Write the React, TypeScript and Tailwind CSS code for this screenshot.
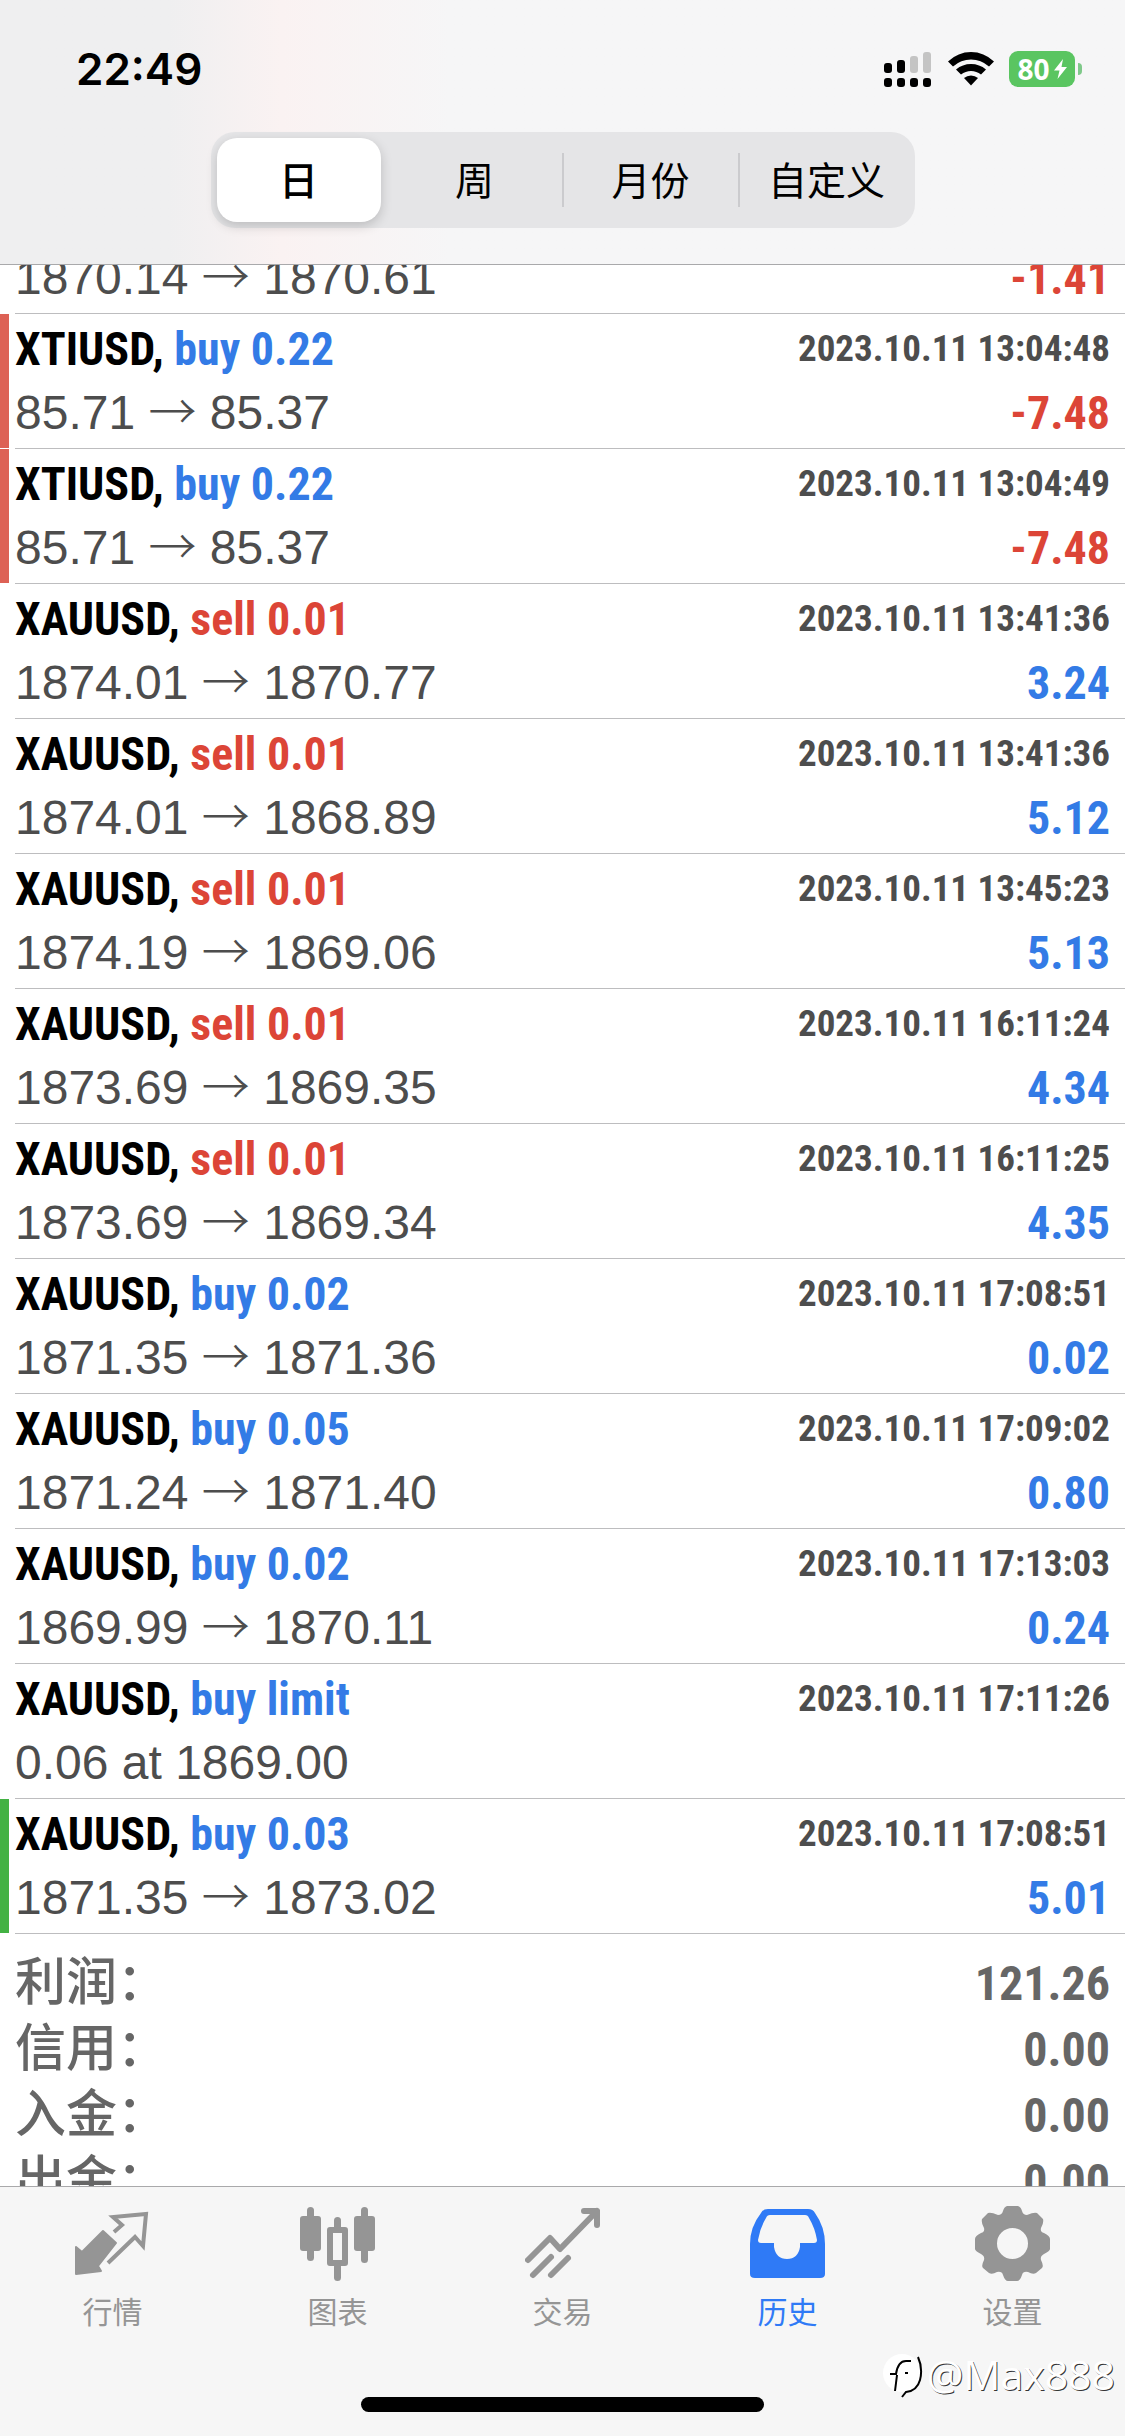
import React from "react";

type Trade = {
  symbol: string;
  side: string;
  time: string;
  open?: string;
  close?: string;
  note?: string;
  profit?: string;
  mark?: "red" | "green";
};

const trades: Trade[] = [
  { symbol: "XTIUSD", side: "buy 0.22", time: "2023.10.11 13:04:48", open: "85.71", close: "85.37", profit: "-7.48", mark: "red" },
  { symbol: "XTIUSD", side: "buy 0.22", time: "2023.10.11 13:04:49", open: "85.71", close: "85.37", profit: "-7.48", mark: "red" },
  { symbol: "XAUUSD", side: "sell 0.01", time: "2023.10.11 13:41:36", open: "1874.01", close: "1870.77", profit: "3.24" },
  { symbol: "XAUUSD", side: "sell 0.01", time: "2023.10.11 13:41:36", open: "1874.01", close: "1868.89", profit: "5.12" },
  { symbol: "XAUUSD", side: "sell 0.01", time: "2023.10.11 13:45:23", open: "1874.19", close: "1869.06", profit: "5.13" },
  { symbol: "XAUUSD", side: "sell 0.01", time: "2023.10.11 16:11:24", open: "1873.69", close: "1869.35", profit: "4.34" },
  { symbol: "XAUUSD", side: "sell 0.01", time: "2023.10.11 16:11:25", open: "1873.69", close: "1869.34", profit: "4.35" },
  { symbol: "XAUUSD", side: "buy 0.02", time: "2023.10.11 17:08:51", open: "1871.35", close: "1871.36", profit: "0.02" },
  { symbol: "XAUUSD", side: "buy 0.05", time: "2023.10.11 17:09:02", open: "1871.24", close: "1871.40", profit: "0.80" },
  { symbol: "XAUUSD", side: "buy 0.02", time: "2023.10.11 17:13:03", open: "1869.99", close: "1870.11", profit: "0.24" },
  { symbol: "XAUUSD", side: "buy limit", time: "2023.10.11 17:11:26", note: "0.06 at 1869.00" },
  { symbol: "XAUUSD", side: "buy 0.03", time: "2023.10.11 17:08:51", open: "1871.35", close: "1873.02", profit: "5.01", mark: "green" },
];

const totals = [
  { label: "利润：", value: "121.26" },
  { label: "信用：", value: "0.00" },
  { label: "入金：", value: "0.00" },
  { label: "出金：", value: "0.00" },
];

const narrow = "font-['Liberation_Sans_Narrow','Roboto_Condensed','Liberation_Sans',sans-serif] font-bold";
const cjk = "font-['Noto_Sans_CJK_SC',sans-serif]";

function Prices({ open, close, note, profit }: Partial<Trade>) {
  return (
    <div className="flex h-[60px] items-center justify-between leading-[60px]">
      <span className="font-['Liberation_Sans','Noto_Sans_CJK_SC',sans-serif] text-[48px] text-[#4d4d4d]">
        {note ?? (
          <>
            {open} <span className="font-['Noto_Sans_CJK_SC',sans-serif] font-light leading-none">→</span> {close}
          </>
        )}
      </span>
      {profit && (
        <span className={`${narrow} text-[46px] ${profit.startsWith("-") ? "text-[#dc4537]" : "text-[#337be6]"}`}>
          {profit}
        </span>
      )}
    </div>
  );
}

function TradeRow(t: Trade) {
  const bar =
    t.mark === "red" ? "border-[#dd6155]" : t.mark === "green" ? "border-[#43b244]" : "border-transparent";
  return (
    <li className="flex flex-col">
      <div className={`flex h-[134px] flex-col gap-[4px] border-l-9 pl-[6px] pr-[15px] pt-[5px] ${bar}`}>
        <div className={`flex h-[60px] items-center justify-between ${narrow}`}>
          <span className="text-[46px] leading-[60px] text-black">
            {t.symbol}, <span className={t.side.startsWith("sell") ? "text-[#dc4537]" : "text-[#337be6]"}>{t.side}</span>
          </span>
          <time className="text-[37px] leading-[60px] text-[#4d4d4d]">{t.time}</time>
        </div>
        <Prices {...t} />
      </div>
      <div className="ml-[15px] h-px bg-[#bdbdbf]" />
    </li>
  );
}

function StatusIcons() {
  return (
    <div className="flex items-center">
      <svg viewBox="0 0 48 36" className="mr-[16px] h-[36px] w-[48px]" aria-hidden="true">
        <g fill="#000">
          <rect x="0" y="12" width="8" height="10" rx="3" />
          <rect x="13" y="9" width="8" height="13" rx="3" />
          <rect x="0" y="27" width="8" height="9" rx="3" />
          <rect x="13" y="27" width="8" height="9" rx="3" />
          <rect x="26" y="27" width="8" height="9" rx="3" />
          <rect x="39" y="27" width="8" height="9" rx="3" />
        </g>
        <g fill="#c4c4c4">
          <rect x="26" y="5" width="8" height="17" rx="3" />
          <rect x="39" y="1" width="8" height="21" rx="3" />
        </g>
      </svg>
      <svg viewBox="0 0 46 36" className="mr-[15px] h-[36px] w-[46px]" aria-hidden="true">
        <path d="M0 10.500Q10 1 23 1Q36 1 46 10.500L41 15.500Q33 8.500 23 8.500Q13 8.500 5 15.500Z" />
        <path d="M8 18.500Q14.500 13 23 13Q31.500 13 38 18.500L33 23.500Q28.500 20 23 20Q17.500 20 13 23.500Z" />
        <path d="M16 27Q19 24.500 23 24.500Q27 24.500 30 27L23 34.500Z" />
      </svg>
      <div className="flex items-center">
        <div className="flex h-[36px] w-[66px] items-center justify-center gap-[4px] rounded-[9px] bg-[#5ac561] text-white">
          <span className="font-['Open_Sans',sans-serif] text-[28px] font-bold leading-none">80</span>
          <svg viewBox="0 0 13 20" className="h-[20px] w-[13px]" fill="currentColor" aria-hidden="true">
            <path d="M9 0L0 11.500H5.500L3.500 20L13 8H7.500Z" />
          </svg>
        </div>
        <div className="ml-[3px] h-[12px] w-[4px] rounded-r-full bg-[#7fc98a]" />
      </div>
    </div>
  );
}

const periods = ["日", "周", "月份", "自定义"];

const icons: Record<string, React.ReactNode> = {
  行情: (
    <>
      <path
        d="M1 41L7 46L28 25L41 37L23 60L26 65L1 68Z"
        fill="currentColor"
        stroke="currentColor"
        strokeWidth="2"
        strokeLinejoin="round"
      />
      <path d="M39 26L47 19L38 11L71 8L68 40L60 31L33 57" fill="none" stroke="currentColor" strokeWidth="4" />
    </>
  ),
  图表: (
    <g fill="currentColor">
      <rect x="0" y="10" width="21" height="35" rx="3" />
      <rect x="7" y="1" width="7" height="54" rx="3.500" />
      <rect x="54" y="10" width="21" height="35" rx="3" />
      <rect x="61" y="1" width="7" height="56" rx="3.500" />
      <path fillRule="evenodd" d="M30 21H45Q48 21 48 24V57Q48 60 45 60H30Q27 60 27 57V24Q27 21 30 21ZM33 27V54H42V27Z" />
      <rect x="34" y="11" width="7" height="14" rx="3.500" />
      <rect x="34" y="57" width="7" height="18" rx="3.500" />
    </g>
  ),
  交易: (
    <g fill="none" stroke="currentColor" strokeWidth="6" strokeLinecap="round" strokeLinejoin="round">
      <path d="M3 54L25 32L35 43L72 5M59 5H72V19" />
      <path d="M8 69L26 51M26 69L43 52" />
    </g>
  ),
  历史: (
    <path
      fill="currentColor"
      fillRule="evenodd"
      d="M18 3H58Q63 3 65 7Q75 21 75 38V68Q75 72 70 72H5Q0 72 0 68V38Q0 21 11 7Q13 3 18 3ZM20 9Q17 9 16 12Q10 22 8 34Q8 37 11 37H24V41Q26 53 37 53Q48 53 50 41V37H64Q67 37 67 34Q65 22 59 12Q58 9 55 9Z"
    />
  ),
  设置: (
    <path
      fill="currentColor"
      fillRule="evenodd"
      d="M32 0H43Q46 1 47 5Q48 9 52 9Q59 6 62 7L68 13Q69 17 66 22Q65 26 69 27Q75 30 75 33V43Q75 45 69 48Q65 50 66 54Q69 60 67 62L61 67Q58 69 53 66Q48 65 47 69Q45 75 42 75H33Q30 75 28 69Q27 65 22 66Q17 69 14 67L8 62Q6 60 9 54Q10 50 6 48Q0 45 0 43V33Q0 30 6 27Q10 26 9 22Q6 17 7 13L13 7Q16 6 23 9Q27 9 28 5Q29 1 32 0ZM37.500 22A15.500 15.500 0 1 0 37.500 53A15.500 15.500 0 1 0 37.500 22Z"
    />
  ),
};

export default function App() {
  return (
    <div className="relative flex h-screen flex-col overflow-hidden bg-white">
      <header className="flex shrink-0 flex-col border-b border-[#a9a9ab] bg-linear-to-r from-[#efeff0] from-15% via-[#faf2f2] via-25% to-[#f6f6f7] to-40%">
        <div className="flex h-[132px] items-center justify-between pl-[76px] pr-[43px] pt-[6px]">
          <time className="font-['Inter',sans-serif] text-[44px] font-semibold leading-none text-black">22:49</time>
          <StatusIcons />
        </div>
        <div className={`mx-auto mb-[36px] grid h-[96px] w-[704px] max-w-full grid-cols-4 rounded-[24px] bg-[#e5e5e7] ${cjk}`}>
          {periods.map((p, i) => (
            <div key={p} className="relative flex p-[6px]">
              {i > 1 && <span className="absolute -left-px top-[21px] h-[54px] w-[2px] bg-[#cbcbce]" />}
              <button
                type="button"
                className={
                  i === 0
                    ? "flex-1 rounded-[20px] bg-white pb-[4px] text-[39px] font-medium leading-none text-black shadow-[0_4px_12px_rgba(0,0,0,0.18)]"
                    : "flex-1 whitespace-nowrap pb-[4px] text-[39px] leading-none text-black"
                }
              >
                {p}
              </button>
            </div>
          ))}
        </div>
      </header>

      <main className="min-h-0 flex-1 overflow-hidden">
        <div className="flex h-[48px] flex-col justify-end overflow-hidden">
          <div className="px-[15px] pb-[5px]">
            <Prices open="1870.14" close="1870.61" profit="-1.41" />
          </div>
        </div>
        <div className="ml-[15px] h-px bg-[#bdbdbf]" />
        <ul>
          {trades.map((t, i) => (
            <TradeRow key={i} {...t} />
          ))}
        </ul>
        <dl className="px-[15px] pt-[15px] text-[#666]">
          {totals.map((s) => (
            <div key={s.label} className="flex h-[66px] items-baseline justify-between leading-[58px]">
              <dt className={`${cjk} text-[51px] font-medium`}>{s.label}</dt>
              <dd className={`${narrow} text-[48px]`}>{s.value}</dd>
            </div>
          ))}
        </dl>
      </main>

      <footer className="shrink-0 border-t border-[#a9a9ab] bg-[#f6f6f6]">
        <nav className="grid h-[146px] grid-cols-5 pt-[19px]">
          {Object.keys(icons).map((name) => (
            <button
              key={name}
              type="button"
              className={
                name === "历史"
                  ? "flex flex-col items-center text-[#2f7af6]"
                  : "flex flex-col items-center text-[#959595]"
              }
            >
              <svg viewBox="0 0 75 76" className="h-[76px] w-[75px]" aria-hidden="true">
                {icons[name]}
              </svg>
              <span className={`${cjk} mt-[12px] text-[30px] leading-[32px]`}>{name}</span>
            </button>
          ))}
        </nav>
        <div className="h-[103px] pt-[64px]">
          <div className="mx-auto h-[15px] w-[403px] rounded-full bg-black" />
        </div>
      </footer>

      <div className="absolute bottom-[34px] right-[10px] flex items-center gap-[4px] text-white">
        <svg viewBox="0 0 42 48" className="h-[48px] w-[42px]" aria-hidden="true">
          <circle cx="21" cy="23" r="19" fill="#fff" />
          <path d="M14 41L16 25M9 24H15Q17 11 25 11H30M24 23H27" fill="none" stroke="#000" strokeWidth="2" />
          <path d="M37 7Q42 18 39 30Q36 41 25 42L21 47" fill="none" stroke="#000" strokeWidth="2" />
        </svg>
        <span className="font-['Open_Sans',sans-serif] text-[41px] leading-[56px] [text-shadow:1px_1px_0_rgba(0,0,0,0.8)]">
          @Max888
        </span>
      </div>
    </div>
  );
}
